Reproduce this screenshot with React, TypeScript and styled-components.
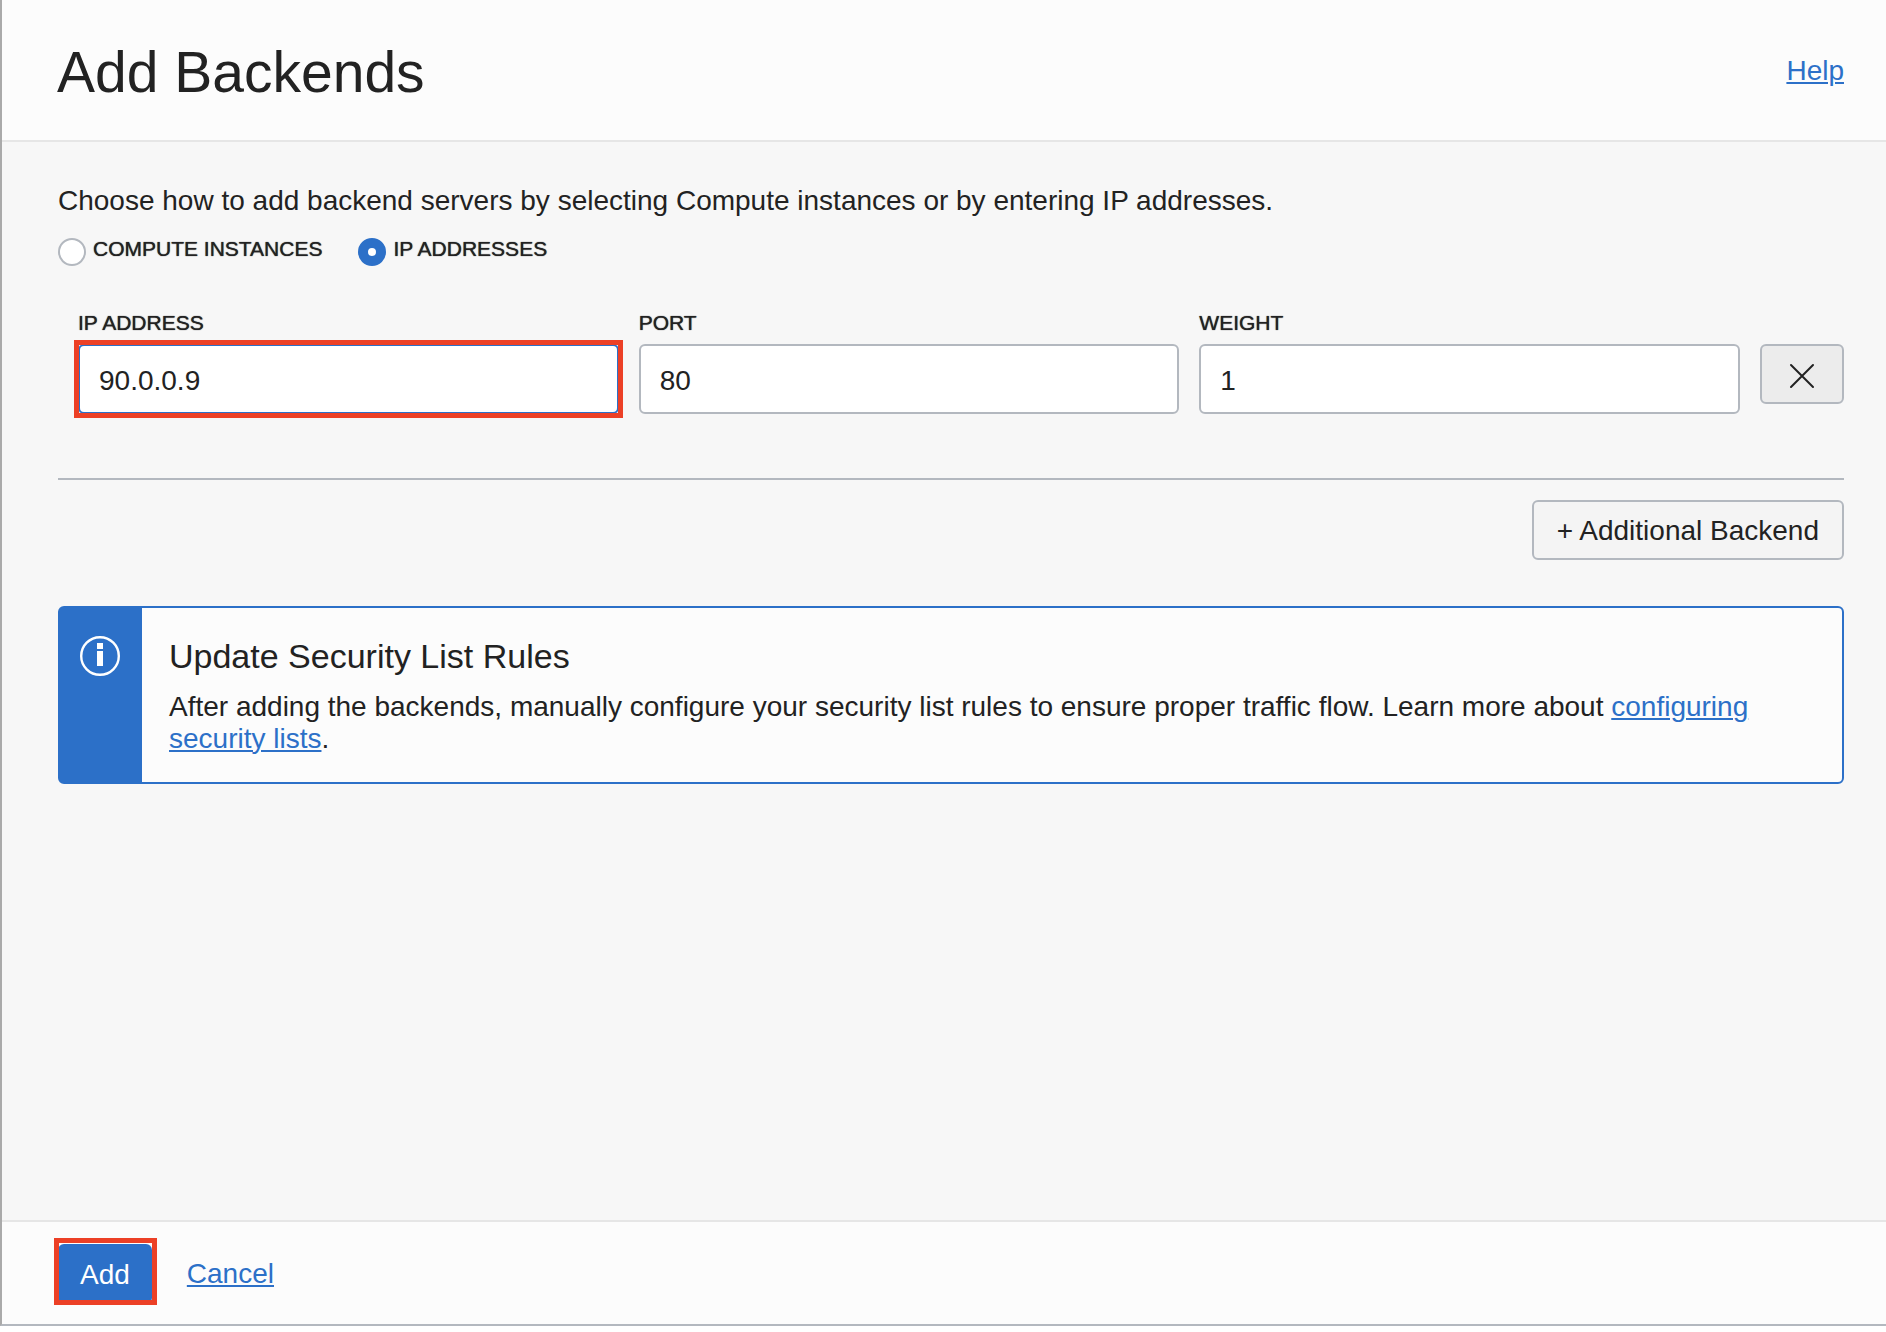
import React, { useState } from "react";
import styled, { createGlobalStyle, css } from "styled-components";

const color = {
  text: "#222222",
  blue: "#2c70c8",
  line: "#b3b8bf",
  soft: "#e6e6e6",
  surface: "#fcfcfc",
  canvas: "#f7f7f7",
  mark: "#ec4026",
};

const GlobalStyle = createGlobalStyle`
  *, *::before, *::after { box-sizing: border-box; }
  body {
    margin: 0;
    background: #ffffff;
    color: ${color.text};
    font-family: "Liberation Sans", Arial, sans-serif;
    font-size: 28px;
    line-height: 32px;
  }
  button, input { font: inherit; color: inherit; }
`;

const Page = styled.div`
  display: flex;
  min-height: 100vh;
  padding-bottom: 6px;
`;

const Panel = styled.form`
  flex: 1;
  display: flex;
  flex-direction: column;
  border-left: 2px solid #aaaaaa;
  border-bottom: 2px solid ${color.line};
  background: ${color.canvas};
`;

const Header = styled.header`
  display: flex;
  align-items: center;
  justify-content: space-between;
  padding: 38px 42px 36px 55px;
  background: ${color.surface};
  border-bottom: 2px solid ${color.soft};
`;

const Title = styled.h1`
  margin: 0;
  padding-top: 2px;
  font-size: 57px;
  font-weight: 400;
  line-height: 64px;
`;

const Link = styled.a`
  color: ${color.blue};
  text-decoration: underline;
  text-decoration-thickness: 2px;
  text-underline-offset: 2px;
`;

const Main = styled.main`
  flex: 1;
  padding: 43px 42px 42px 56px;
`;

const Intro = styled.p`
  margin: 0;
`;

const RadioGroup = styled.div`
  display: flex;
  gap: 36px;
  margin-top: 20px;
`;

const capsText = css`
  font-size: 21px;
  line-height: 24px;
  text-shadow: 0 0 1px ${color.text};
`;

const RadioLabel = styled.label`
  display: flex;
  align-items: flex-start;
  gap: 7px;
  ${capsText}
`;

const Radio = styled.input`
  appearance: none;
  width: 28px;
  height: 28px;
  margin: 1px 0 0;
  border: 2px solid ${color.line};
  border-radius: 50%;
  background: #ffffff;

  &:checked {
    border: 10px solid ${color.blue};
  }
`;

const BackendRow = styled.div`
  display: flex;
  align-items: flex-start;
  gap: 20px;
  margin-top: 45px;
  padding: 0 0 64px 20px;
  border-bottom: 2px solid ${color.line};
`;

const Field = styled.div`
  flex: 1;
  min-width: 0;
`;

const FieldLabel = styled.label`
  display: block;
  margin-bottom: 9px;
  ${capsText}
`;

const Marked = styled.div<{ $inset?: string }>`
  position: relative;

  ${({ $inset }) =>
    $inset &&
    css`
      &::after {
        content: "";
        position: absolute;
        inset: ${$inset};
        border: 5px solid ${color.mark};
        pointer-events: none;
      }
    `}
`;

const TextInput = styled.input<{ $active?: boolean }>`
  display: block;
  width: 100%;
  height: 70px;
  padding: 4px 19px 0;
  border: 2px solid ${({ $active }) => ($active ? color.blue : color.line)};
  border-radius: 6px;
  background: #ffffff;
  outline: none;
`;

const Button = styled.button<{ $primary?: boolean }>`
  display: block;
  height: 60px;
  padding: 2px 20px 0;
  border: 2px solid ${({ $primary }) => ($primary ? color.blue : color.line)};
  border-radius: 6px;
  background: ${({ $primary }) => ($primary ? color.blue : "#f4f4f4")};
  color: ${({ $primary }) => ($primary ? "#ffffff" : color.text)};
`;

const RemoveButton = styled(Button)`
  display: flex;
  align-items: center;
  justify-content: center;
  width: 84px;
  margin-top: 33px;
  padding: 4px 0 0;
  background: #ececec;
`;

const AddRowButton = styled(Button)`
  padding: 2px 23px 0;
`;

const Actions = styled.div`
  display: flex;
  justify-content: flex-end;
  margin-top: 20px;
`;

const Notice = styled.section`
  display: flex;
  margin-top: 46px;
  border: 2px solid ${color.blue};
  border-radius: 6px;
  background: ${color.surface};
`;

const NoticeMark = styled.div`
  flex: none;
  width: 82px;
  padding: 28px 20px;
  background: ${color.blue};

  svg { display: block; }
`;

const NoticeBody = styled.div`
  padding: 28px 27px 27px;
`;

const NoticeTitle = styled.h2`
  margin: 0 0 15px;
  font-size: 34px;
  font-weight: 400;
  line-height: 40px;
`;

const NoticeText = styled.p`
  margin: 0;
`;

const Footer = styled.footer`
  display: flex;
  align-items: center;
  gap: 35px;
  padding: 22px 42px 20px 56px;
  background: ${color.surface};
  border-top: 2px solid ${color.soft};
`;

const fields = [
  { id: "ip", label: "IP ADDRESS", value: "90.0.0.9", marked: true },
  { id: "port", label: "PORT", value: "80", marked: false },
  { id: "weight", label: "WEIGHT", value: "1", marked: false },
];

const sources = [
  { id: "compute", label: "COMPUTE INSTANCES" },
  { id: "ips", label: "IP ADDRESSES" },
];

export default function App() {
  const [source, setSource] = useState("ips");

  return (
    <Page>
      <GlobalStyle />
      <Panel onSubmit={(event) => event.preventDefault()}>
        <Header>
          <Title>Add Backends</Title>
          <Link href="#help">Help</Link>
        </Header>

        <Main>
          <Intro>
            Choose how to add backend servers by selecting Compute instances or by entering IP addresses.
          </Intro>

          <RadioGroup role="radiogroup" aria-label="Backend source">
            {sources.map(({ id, label }) => (
              <RadioLabel key={id} htmlFor={id}>
                <Radio
                  id={id}
                  type="radio"
                  name="source"
                  checked={source === id}
                  onChange={() => setSource(id)}
                />
                {label}
              </RadioLabel>
            ))}
          </RadioGroup>

          <BackendRow>
            {fields.map(({ id, label, value, marked }) => (
              <Field key={id}>
                <FieldLabel htmlFor={id}>{label}</FieldLabel>
                <Marked $inset={marked ? "-4px" : undefined}>
                  <TextInput id={id} type="text" defaultValue={value} $active={marked} />
                </Marked>
              </Field>
            ))}
            <RemoveButton type="button" aria-label="Remove backend">
              <svg width="28" height="28" viewBox="0 0 28 28" fill="none" stroke={color.text} strokeWidth="2">
                <path d="M3 3 25 25M25 3 3 25" strokeLinecap="round" />
              </svg>
            </RemoveButton>
          </BackendRow>

          <Actions>
            <AddRowButton type="button">+ Additional Backend</AddRowButton>
          </Actions>

          <Notice>
            <NoticeMark>
              <svg width="40" height="40" viewBox="0 0 40 40" fill="none" aria-hidden="true">
                <circle cx="20" cy="20" r="18.8" stroke="#ffffff" strokeWidth="2.4" />
                <path d="M17 7h6v6h-6zM17 15h6v15h-6z" fill="#ffffff" />
              </svg>
            </NoticeMark>
            <NoticeBody>
              <NoticeTitle>Update Security List Rules</NoticeTitle>
              <NoticeText>
                After adding the backends, manually configure your security list rules to ensure proper traffic
                flow. Learn more about <Link href="#security-lists">configuring security lists</Link>.
              </NoticeText>
            </NoticeBody>
          </Notice>
        </Main>

        <Footer>
          <Marked $inset="-6px -5px -1px -4px">
            <Button type="submit" $primary>
              Add
            </Button>
          </Marked>
          <Link href="#cancel">Cancel</Link>
        </Footer>
      </Panel>
    </Page>
  );
}
